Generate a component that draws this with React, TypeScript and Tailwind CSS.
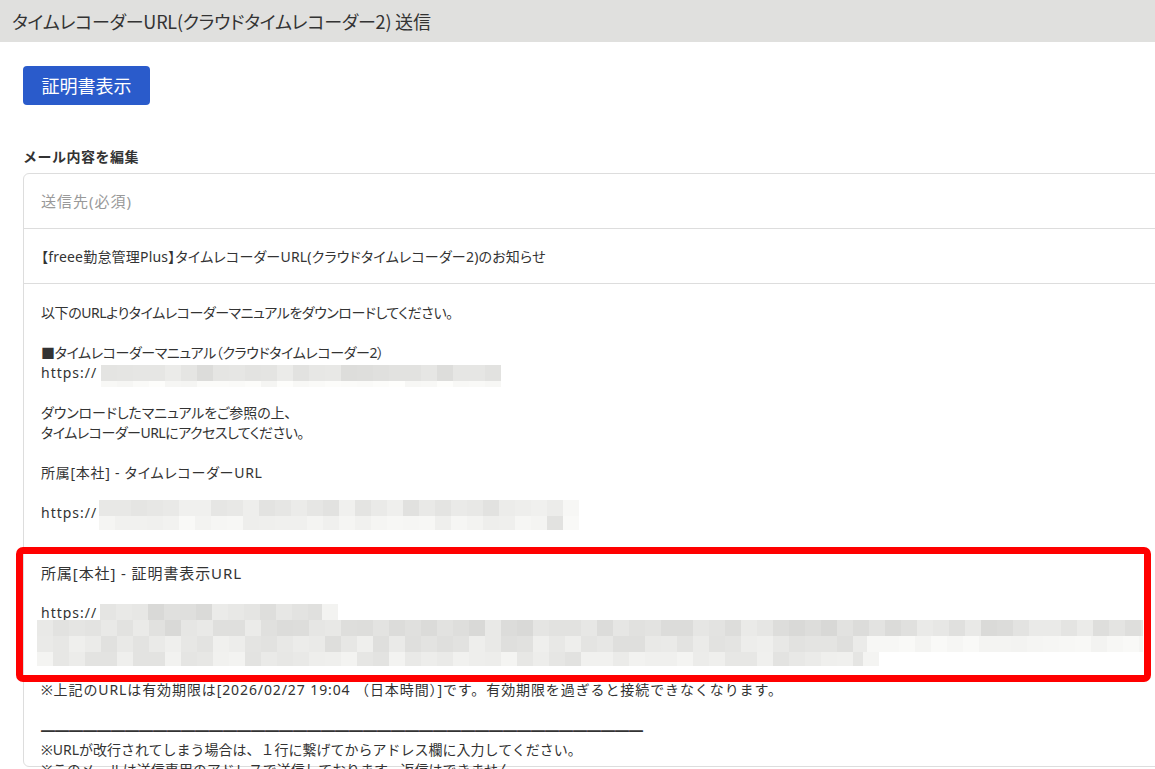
import React from "react";

function rng(seed: number) {
  let s = seed >>> 0;
  return () => {
    s = (s + 0x6d2b79f5) >>> 0;
    let t = s;
    t = Math.imul(t ^ (t >>> 15), t | 1);
    t ^= t + Math.imul(t ^ (t >>> 7), t | 61);
    return ((t ^ (t >>> 14)) >>> 0) / 4294967296;
  };
}

type Seg = { w: number; min: number; max: number };

function BlurRow({ segs, h, seed }: { segs: Seg[]; h: number; seed: number }) {
  const r = rng(seed);
  const cells: { w: number; c: string }[] = [];
  segs.forEach((s) => {
    let left = s.w;
    while (left > 0) {
      const w = Math.min(16, left);
      const v = Math.round(s.min + r() * (s.max - s.min));
      cells.push({ w, c: `rgb(${v},${v},${Math.max(0, v - 2)})` });
      left -= w;
    }
  });
  return (
    <div className="flex shrink-0">
      {cells.map((c, i) => (
        <div key={i} style={{ width: c.w, height: h, backgroundColor: c.c }} />
      ))}
    </div>
  );
}

const L = ({ children, className = "" }: { children?: React.ReactNode; className?: string }) => (
  <div className={"h-[20px] leading-[20px] whitespace-pre " + className}>{children ?? " "}</div>
);

export default function App() {
  return (
    <div className="relative w-[1155px] h-[769px] overflow-hidden bg-white font-['Noto_Sans','Noto_Sans_CJK_JP',sans-serif] text-[#333]">
      <div className="h-[42px] bg-[#e0e0de] flex items-center pl-[12px] text-[18px] text-[#333] tracking-[-0.2px] font-['Noto_Sans_CJK_JP',sans-serif] [font-feature-settings:'palt']">
        タイムレコーダーURL(クラウドタイムレコーダー2) 送信
      </div>

      <div className="pl-[23px]">
        <div className="mt-[24px] w-[127px] h-[39px] rounded-[4px] bg-[#2a5bcb] text-white text-[18px] flex items-center justify-center font-['Noto_Sans_CJK_JP',sans-serif]">
          証明書表示
        </div>

        <div className="mt-[41px] h-[20px] leading-[20px] text-[14px] font-bold text-[#333] tracking-[0.5px] font-['Noto_Sans_CJK_JP',sans-serif]">
          メール内容を編集
        </div>

        <div className="mt-[7px] w-[1160px] h-[594px] border border-[#dddddd] rounded-l-[6px] text-[14px]">
          <div className="h-[55px] border-b border-[#dddddd] flex items-center pl-[17px] text-[#999] text-[15px] tracking-[1px]">
            送信先(必須)
          </div>
          <div className="h-[55px] border-b border-[#dddddd] flex items-center pl-[17px] tracking-[0.2px] [font-feature-settings:'palt']">
            【freee勤怠管理Plus】タイムレコーダーURL(クラウドタイムレコーダー2)のお知らせ
          </div>
          <div className="pt-[19px] pl-[17px]">
            <L className="[font-feature-settings:'palt'] tracking-[-0.45px]">以下のURLよりタイムレコーダーマニュアルをダウンロードしてください。</L>
            <L />
            <L className="[font-feature-settings:'palt'] tracking-[-0.4px]">■タイムレコーダーマニュアル（クラウドタイムレコーダー2）</L>
            <div className="h-[20px] leading-[20px] flex items-start">
              <span className="whitespace-pre w-[60px] tracking-[1px]">https://</span>
              <div className="mt-[2px] flex flex-col">
                <BlurRow h={16} seed={11} segs={[{ w: 400, min: 218, max: 238 }]} />
                <BlurRow h={6} seed={12} segs={[{ w: 400, min: 245, max: 254 }]} />
              </div>
            </div>
            <L />
            <L className="[font-feature-settings:'palt'] tracking-[-0.1px]">ダウンロードしたマニュアルをご参照の上、</L>
            <L className="[font-feature-settings:'palt'] tracking-[-0.5px]">タイムレコーダーURLにアクセスしてください。</L>
            <L />
            <L className="[font-feature-settings:'palt'] tracking-[0.75px]">所属[本社] - タイムレコーダーURL</L>
            <L />
            <div className="h-[20px] leading-[20px] flex items-start">
              <span className="whitespace-pre w-[58px] tracking-[1px]">https://</span>
              <div className="-mt-[3px] flex flex-col">
                <BlurRow h={16} seed={21} segs={[{ w: 464, min: 224, max: 242 }, { w: 16, min: 246, max: 248 }]} />
                <BlurRow h={14} seed={22} segs={[{ w: 448, min: 238, max: 250 }, { w: 16, min: 226, max: 228 }, { w: 16, min: 248, max: 250 }]} />
              </div>
            </div>
            <L />
            <L />
            <L className="[font-feature-settings:'palt'] text-[15px] tracking-[0.9px]">所属[本社] - 証明書表示URL</L>
            <L />
            <div className="h-[20px] leading-[20px] flex items-start">
              <span className="whitespace-pre w-[59px] tracking-[1px]">https://</span>
              <div className="mt-[1px]">
                <BlurRow h={17} seed={31} segs={[{ w: 222, min: 216, max: 236 }, { w: 16, min: 240, max: 244 }]} />
              </div>
            </div>
            <div className="h-[60px] -ml-[4px]">
              <div className="-mt-[3px] flex flex-col">
                <BlurRow h={16} seed={41} segs={[{ w: 1106, min: 216, max: 236 }]} />
                <BlurRow h={16} seed={42} segs={[{ w: 830, min: 222, max: 242 }, { w: 276, min: 243, max: 249 }]} />
                <BlurRow h={14} seed={43} segs={[{ w: 826, min: 226, max: 244 }, { w: 16, min: 242, max: 244 }]} />
              </div>
            </div>
            <L className="tracking-[0.9px]">※上記のURLは有効期限は[2026/02/27 19:04 （日本時間）]です。有効期限を過ぎると接続できなくなります。</L>
            <L />
            <L className="font-['Noto_Sans_CJK_JP',sans-serif]">━━━━━━━━━━━━━━━━━━━━━━━━━━━━━━━━━━━━━━━━━━━</L>
            <L>※URLが改行されてしまう場合は、１行に繋げてからアドレス欄に入力してください。</L>
            <L>※このメールは送信専用のアドレスで送信しております。返信はできません。</L>
          </div>
        </div>
      </div>

      <div className="absolute left-[16px] top-[547px] w-[1135px] h-[135px] border-[7px] border-[#ff0000] rounded-[7px]" />
    </div>
  );
}
